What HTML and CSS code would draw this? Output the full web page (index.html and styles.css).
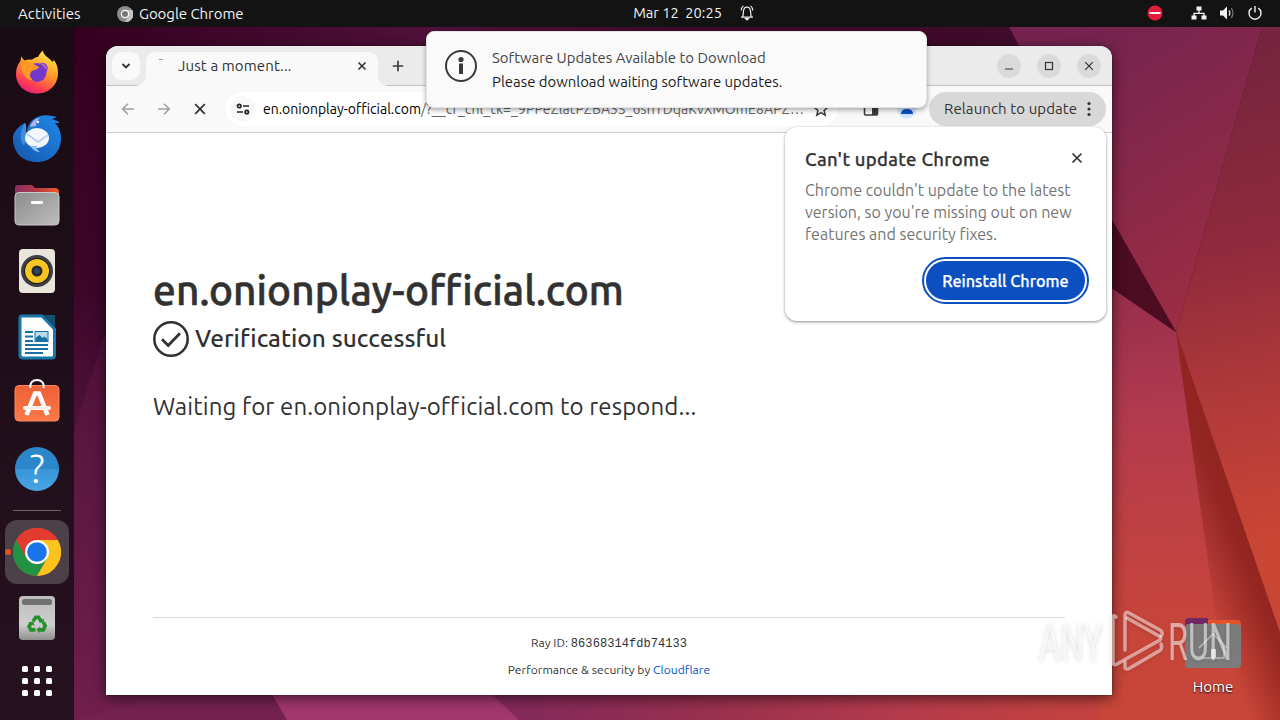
FILE: index.html
```
<!DOCTYPE html>
<html lang="en">

<head>
    <meta charset="UTF-8">
    <meta name="viewport" content="width=device-width, initial-scale=1.0">
    <title>Desktop</title>
    <link rel="stylesheet" href="styles.css">
</head>

<body>
    <!-- wallpaper -->
    <svg class="wallpaper" width="1280" height="720" viewBox="0 0 1280 720">
        <defs>
            <linearGradient id="base" x1="0" y1="0" x2="0" y2="1">
                <stop offset="0" stop-color="#35001f"/><stop offset=".4" stop-color="#3d0629"/>
                <stop offset=".65" stop-color="#54163e"/><stop offset="1" stop-color="#74204f"/>
            </linearGradient>
            <linearGradient id="topbg" x1="0" y1="0" x2="1" y2="0">
                <stop offset="0" stop-color="#35001f"/><stop offset=".35" stop-color="#50103a"/>
                <stop offset=".65" stop-color="#3c0a28"/><stop offset="1" stop-color="#420b2b"/>
            </linearGradient>
            <linearGradient id="bottombg" gradientUnits="userSpaceOnUse" x1="490" y1="0" x2="1180" y2="0">
                <stop offset="0" stop-color="#81285b"/><stop offset=".3" stop-color="#96304f"/>
                <stop offset=".6" stop-color="#b53b4b"/><stop offset="1" stop-color="#ca463a"/>
            </linearGradient>
            <linearGradient id="purple" gradientUnits="userSpaceOnUse" x1="1060" y1="40" x2="1220" y2="300">
                <stop offset="0" stop-color="#74234f"/><stop offset="1" stop-color="#9b2d44"/>
            </linearGradient>
            <linearGradient id="right" gradientUnits="userSpaceOnUse" x1="1190" y1="60" x2="1290" y2="530">
                <stop offset="0" stop-color="#76243f"/><stop offset=".4" stop-color="#8f2a3c"/>
                <stop offset=".7" stop-color="#b0393a"/><stop offset="1" stop-color="#c94534"/>
            </linearGradient>
            <linearGradient id="red" gradientUnits="userSpaceOnUse" x1="1130" y1="280" x2="1150" y2="640">
                <stop offset="0" stop-color="#942d4d"/><stop offset=".4" stop-color="#b43b4d"/>
                <stop offset="1" stop-color="#c84639"/>
            </linearGradient>
            <linearGradient id="shade" gradientUnits="userSpaceOnUse" x1="1180" y1="540" x2="1254" y2="511">
                <stop offset="0" stop-color="#8f2018" stop-opacity="0"/><stop offset=".65" stop-color="#8d211d" stop-opacity=".85"/>
                <stop offset="1" stop-color="#92241d"/>
            </linearGradient>
        </defs>
        <rect width="1280" height="720" fill="url(#base)"/>
        <polygon points="74,430 106,330 106,720 74,720" fill="#6b1c49" opacity=".35"/>
        <rect x="74" y="27" width="1000" height="40" fill="url(#topbg)"/>
        <polygon points="260,670 1200,670 1280,720 74,720" fill="#74224f"/>
        <polygon points="474,680 1200,600 1280,720 519,720" fill="url(#bottombg)"/>
        <polygon points="264,680 477,680 519,720 287,720" fill="#a2366f"/>
        <polygon points="1009,27 1262,27 1176,332 1112,220" fill="url(#purple)"/>
        <polygon points="1262,27 1280,27 1280,633 1176,332" fill="url(#right)"/>
        <polygon points="1100,280 1176,332 1280,633 1280,720 1100,720" fill="url(#red)"/>
        <polygon points="1176,332 1280,633 1280,720 1230,720" fill="url(#shade)"/>
        <polygon points="1100,202 1112,220 1176,332 1100,280" fill="#4c0c22"/>
    </svg>

    <header class="topbar">
        <div class="topbar-left">
            <span class="activities">Activities</span>
            <svg width="16" height="16" viewBox="0 0 16 16"><circle cx="8" cy="8" r="8" fill="#8c8c8c"/><path d="M8 4h7.5A8 8 0 0 1 8 16l3.5-6z" fill="#c4c4c4"/><circle cx="8" cy="8" r="3.6" fill="#777" stroke="#fff" stroke-width="1.2"/></svg>
            <span class="appname">Google Chrome</span>
        </div>
        <div class="clock">
            <span>Mar 12&nbsp; 20:25</span>
            <svg width="14" height="17" viewBox="0 0 14 17" fill="none" stroke="#eee" stroke-width="1.2"><path d="M1 13.2h12M2.8 13c.5-2 .4-4 .7-6C3.8 4.500 5 3.200 7 3.200s3.200 1.300 3.500 3.800c.3 2 .2 4 .7 6M1.200 6.500c.1-2 .9-3.500 2.200-4.600M12.800 6.500c-.1-2-.9-3.500-2.200-4.600"/><path d="M5.500 14.500h3L7 16z" fill="#eee"/></svg>
        </div>
        <div class="tray">
            <svg class="busy" width="16" height="16" viewBox="0 0 16 16"><circle cx="8" cy="8" r="7.500" fill="#e01b3c"/><path d="M2.500 8h11" stroke="#fff" stroke-width="2"/></svg>
            <svg width="16" height="16" viewBox="0 0 16 16" fill="#f2f2f2"><path d="M5.500 1.500h5v4h-5zM.5 10.500h5v4h-5zM10.500 10.500h5v4h-5z"/><path d="M8 5v3.300M3 11V8.300h10V11" fill="none" stroke="#f2f2f2" stroke-width="1.300"/></svg>
            <svg width="16" height="16" viewBox="0 0 16 16" fill="#f2f2f2"><path d="M1 5.500h3L8 1.500v13l-4-4H1z"/><path d="M10 5.300q1.800 2.700 0 5.400" fill="none" stroke="#ddd" stroke-width="1.300"/><path d="M12.300 3.200q3.200 4.800 0 9.600" fill="none" stroke="#777" stroke-width="1.200"/></svg>
            <svg width="16" height="16" viewBox="0 0 16 16" fill="none" stroke="#f2f2f2" stroke-width="1.400"><path d="M4.700 3.200a6 6 0 1 0 6.600 0M8 1v6.500"/></svg>
        </div>
    </header>

    <div class="screen">
        <nav class="dock">
            <div class="dock-item">
                <svg width="44" height="46" viewBox="0 0 44 46">
                    <defs><linearGradient id="fx" x1=".8" y1="0" x2=".3" y2="1"><stop offset="0" stop-color="#fff04a"/><stop offset=".45" stop-color="#ff9a26"/><stop offset=".8" stop-color="#ff3f50"/><stop offset="1" stop-color="#e6207c"/></linearGradient></defs>
                    <path d="M1 24C1 18 3 14 5.500 11c0-1.500.3-3 1-4.500 1 2 2 3.200 3.500 4 2-1 4.500-1.200 7-.8 2-1.700 4-2.500 6-2.700C24 5 26 2 28 .5c0 5 6 7 9 11 1.500.5 1.500-.5 1.500-2C42 14 43 18 43 23c0 12-9 20.500-21 20.500S1 35 1 24z" fill="url(#fx)"/>
                    <circle cx="22" cy="22.500" r="9.500" fill="#7437cc"/>
                    <path d="M6 14c6-2 10-3 14 1l4 2c-1 3-7 3-8 5-2 3-1 6 3 9-8-1-13-8-13-17z" fill="#ff9825"/>
                    <path d="M24 13.500c6 0 9 5 6 10 3-2 4-7 1-9.500-2-1.500-5-1.500-7-.5z" fill="#9344e0"/>
                </svg>
            </div>
            <div class="dock-item">
                <svg width="50" height="50" viewBox="0 0 50 50">
                    <defs><linearGradient id="tb" x1="1" y1="0" x2="0" y2="1"><stop offset="0" stop-color="#2089e8"/><stop offset="1" stop-color="#1557ae"/></linearGradient></defs>
                    <path d="M1 22C3 16 8 11 13 9c2 2 0 7 2 10 0-8 4-14 13-17 7-2 13 0 17 1l-5 2c3 1 6 2 8 4l-5 0c4 4 6 9 6 15 0 14-10 24-24 24C10 48 0 38 1 22z" fill="url(#tb)"/>
                    <path d="M13 9c3 3-1 9 3 14l-4 9C7 26 8 16 13 9z" fill="#3d8ce0"/>
                    <path d="M18 13c2-6 6-9 10-9-3 2-4 5-4 8z" fill="#b9b0ea"/>
                    <circle cx="26" cy="8" r="1.200" fill="#e9f3ff"/>
                    <ellipse cx="25" cy="24" rx="12" ry="10" fill="#f3f8ff"/>
                    <path d="M15 20l11 8 10-7" fill="none" stroke="#b8d1ed" stroke-width="2"/>
                    <path d="M18 32c3 4 6 6 10 6-3-2-4-4-3-6z" fill="#8ec0f2"/>
                </svg>
            </div>
            <div class="dock-item">
                <svg width="46" height="42" viewBox="0 0 46 42">
                    <defs><linearGradient id="fol" x1="0" x2="1"><stop offset="0" stop-color="#87305e"/><stop offset=".5" stop-color="#b83848"/><stop offset="1" stop-color="#ee5a24"/></linearGradient>
                    <linearGradient id="gray" x1="0" y1="0" x2="1" y2="1"><stop offset="0" stop-color="#8c8c8c"/><stop offset="1" stop-color="#bdbdbd"/></linearGradient></defs>
                    <path d="M1 4q0-3 3-3h14l3 3h20q4 0 4 4v10H1z" fill="url(#fol)"/>
                    <rect x="1" y="8.500" width="44" height="32.500" rx="4" fill="url(#gray)" stroke="#c9c9c9"/>
                    <rect x="17" y="17" width="12" height="3" rx="1" fill="#fff"/>
                </svg>
            </div>
            <div class="dock-item">
                <svg width="38" height="46" viewBox="0 0 38 46"><rect x="1" y="1" width="36" height="44" rx="4" fill="#e9e5db"/><circle cx="19" cy="23" r="16" fill="#3c3f43"/><circle cx="19" cy="23" r="13" fill="#1f1c18"/><circle cx="19" cy="23" r="12" fill="#f7c522"/><circle cx="19" cy="23" r="5.500" fill="#252a30"/><circle cx="19" cy="23" r="2.800" fill="#3b4855"/></svg>
            </div>
            <div class="dock-item">
                <svg width="38" height="46" viewBox="0 0 38 46"><path d="M3 2h21l12.500 13v26q0 3-3 3H5q-3 0-3-3V4q0-2 2-2z" fill="#fff" stroke="#1878ac" stroke-width="3"/><path d="M25 1h12v13z" fill="#14506f"/><path d="M7 18h8M7 22.500h8M7 27h8M7 31h23M7 35h23M7 39h18" stroke="#17709f" stroke-width="2"/><rect x="17" y="17.500" width="13" height="10" fill="#b9ddf0" stroke="#17709f"/><path d="M17.500 27v-3l4-3 3 3 2-1.500 3 2.500v2z" fill="#17709f"/></svg>
            </div>
            <div class="dock-item">
                <svg width="46" height="48" viewBox="0 0 46 48">
                    <defs><linearGradient id="store" x1="0" y1="0" x2="0" y2="1"><stop offset="0" stop-color="#ee6038"/><stop offset="1" stop-color="#fb7946"/></linearGradient></defs>
                    <rect x="1" y="6.500" width="44" height="35.500" rx="4" fill="url(#store)" stroke="#fb8a61"/>
                    <path d="M16.500 9c-1-5 2-8 6.500-8s7.500 3 6.500 8" fill="none" stroke="#fff" stroke-width="2"/>
                    <path d="M12.500 36L21 14.500h4L33.500 36" fill="none" stroke="#fff" stroke-width="4.500"/>
                    <path d="M11 29h24" stroke="#fff" stroke-width="4" stroke-linecap="round"/><path d="M12 29h22" stroke="#ffc8b3" stroke-width=".8"/>
                </svg>
            </div>
            <div class="dock-item">
                <span class="help">?</span>
            </div>
            <div class="dock-line"></div>
            <div class="dock-item active">
                <svg width="48" height="48" viewBox="0 0 48 48">
                    <circle cx="24" cy="24" r="24" fill="#e33b2e"/>
                    <path d="M3.200 12A24 24 0 0 0 24 48l10.400-18z" fill="#229342"/>
                    <path d="M24 48A24 24 0 0 0 44.800 12H24l10.400 18z" fill="#fcc31e"/>
                    <path d="M3.200 12l10.400 18L24 12h20.800A24 24 0 0 0 3.200 12z" fill="#e33b2e"/>
                    <circle cx="24" cy="24" r="12" fill="#fff"/><circle cx="24" cy="24" r="9.800" fill="#1a73e8"/>
                </svg>
            </div>
            <div class="dock-item">
                <svg width="38" height="46" viewBox="0 0 38 46">
                    <defs><linearGradient id="bin" x1="0" y1="0" x2="0" y2="1"><stop offset="0" stop-color="#bdbdbd"/><stop offset=".65" stop-color="#cecece"/><stop offset="1" stop-color="#8f8f8f"/></linearGradient></defs>
                    <rect x="1" y="1" width="36" height="44" rx="4" fill="url(#bin)"/><rect x="4" y="4" width="30" height="6" rx="2.500" fill="#707070"/>
                    <g transform="translate(2 2.500) scale(.9)"><path d="M14.500 26.500l3-4.500h3l3 4.500M26 27.500l2 4-2 4.500h-5M17 36h-5l-2-4 2.500-4" fill="none" stroke="#26912c" stroke-width="4"/>
                    <path d="M21 28l5.500 0 0-5zM22 32.500v7l-4-3.500zM9 28l6-1.500 1 5z" fill="#26912c"/></g>
                </svg>
            </div>
            <div class="dock-item apps">
                <i></i><i></i><i></i><i></i><i></i><i></i><i></i><i></i><i></i>
            </div>
        </nav>

        <main class="workspace">
            <!-- desktop icon -->
            <div class="home">
                <svg width="58" height="54" viewBox="0 0 58 54"><path d="M1 6q0-4 4-4h18l4 4h26q4 0 4 4v10H1z" fill="#6f2864"/><path d="M24 4h29q4 0 4 4v6H24z" fill="#e2542c"/><rect x="1" y="8" width="56" height="44" rx="4" fill="#7c7c7c"/><path d="M15 32l14-14 14 14M18 42h22V30M29 34v8" fill="none" stroke="#bdbdbd" stroke-width="1.500"/><rect x="27" y="33" width="5" height="9" fill="#ddd"/></svg>
                <span>Home</span>
            </div>

            <!-- browser window -->
            <section class="window">
                <div class="tabstrip">
                    <div class="tab-search">
                        <svg width="10" height="8" viewBox="0 0 10 8" fill="none" stroke="#333" stroke-width="1.900"><path d="M1.500 2L5 5.500 8.500 2"/></svg>
                    </div>
                    <div class="tab">
                        <span class="spinner"></span>
                        <span class="tab-title">Just a moment...</span>
                        <svg width="10" height="10" viewBox="0 0 10 10" stroke="#333" stroke-width="1.600"><path d="M1.500 1.500l7 7M8.500 1.500l-7 7"/></svg>
                    </div>
                    <svg class="newtab" width="12" height="12" viewBox="0 0 12 12" stroke="#3a3a3a" stroke-width="1.700"><path d="M6 .8v10.400M.8 6h10.400"/></svg>
                    <div class="controls">
                        <span><svg width="10" height="10" viewBox="0 0 10 10"><path d="M1 8h8" stroke="#333" stroke-width="1.200"/></svg></span>
                        <span><svg width="10" height="10" viewBox="0 0 10 10"><rect x="1.500" y="1.500" width="7" height="7" fill="none" stroke="#333" stroke-width="1.200"/></svg></span>
                        <span><svg width="10" height="10" viewBox="0 0 10 10"><path d="M1.200 1.200l7.600 7.600M8.800 1.200L1.200 8.800" stroke="#333" stroke-width="1.200"/></svg></span>
                    </div>
                </div>
                <div class="toolbar">
                    <div class="nav-buttons">
                        <svg width="14" height="14" viewBox="0 0 14 14" fill="none" stroke="#a0a0a0" stroke-width="1.600"><path d="M13 7H2M7 1.700L1.700 7 7 12.300"/></svg>
                        <svg width="14" height="14" viewBox="0 0 14 14" fill="none" stroke="#a0a0a0" stroke-width="1.600"><path d="M1 7h11M7 1.700L12.300 7 7 12.300"/></svg>
                        <svg width="14" height="14" viewBox="0 0 14 14" stroke="#333" stroke-width="1.800"><path d="M2.200 2.200l9.600 9.600M11.800 2.200l-9.600 9.600"/></svg>
                    </div>
                    <div class="omnibox">
                        <span class="site-info"><svg width="14" height="12" viewBox="0 0 14 12" fill="none" stroke="#222" stroke-width="1.700"><circle cx="3.200" cy="3" r="1.700"/><path d="M7 3h6M1 9h6"/><circle cx="10.800" cy="9" r="1.700"/></svg></span>
                        <span class="url"><b>en.onionplay-official.com</b>/?__cf_chl_tk=_9PPeZlatPZBA3S_6snTDqaKvXMOmE8APZ…</span>
                        <svg width="16" height="16" viewBox="0 0 16 16" fill="none" stroke="#3c3c3c" stroke-width="1.500"><path d="M8 1.500l1.900 4.400 4.800.4-3.600 3.200 1.100 4.700L8 11.700l-4.200 2.500 1.100-4.700L1.300 6.300l4.800-.4z"/></svg>
                    </div>
                    <svg class="sidepanel" width="16" height="16" viewBox="0 0 16 16"><rect x="1.500" y="2" width="13" height="12" rx="1" fill="none" stroke="#3c3c3c" stroke-width="1.600"/><path d="M9 2h5.500v12H9z" fill="#3c3c3c"/></svg>
                    <svg class="avatar" width="20" height="20" viewBox="0 0 20 20"><circle cx="10" cy="10" r="9.500" fill="#d3e3fd"/><circle cx="10" cy="6" r="3" fill="#0b57d0"/><path d="M4 15q0-5 6-5t6 5z" fill="#0b4fc0"/></svg>
                    <div class="relaunch">
                        <span>Relaunch to update</span>
                        <svg width="4" height="16" viewBox="0 0 4 16" fill="#333"><circle cx="2" cy="2.500" r="1.600"/><circle cx="2" cy="8" r="1.600"/><circle cx="2" cy="13.500" r="1.600"/></svg>
                    </div>
                </div>
                <div class="page">
                    <h1>en.onionplay-official.com</h1>
                    <div class="verified">
                        <svg width="36" height="36" viewBox="0 0 36 36" fill="none" stroke="#313131" stroke-width="2.500"><circle cx="18" cy="18" r="16.700"/><path d="M9 18.200l6.200 6.300L27 12.200" stroke-width="2.700"/></svg>
                        <h2>Verification successful</h2>
                    </div>
                    <p class="waiting">Waiting for en.onionplay-official.com to respond...</p>
                    <footer class="footer">
                        <div class="ray">Ray ID: <code>86368314fdb74133</code></div>
                        <div class="perf">Performance &amp; security by <a>Cloudflare</a></div>
                    </footer>
                </div>
            </section>

            <!-- update popup -->
            <section class="popup">
                <div class="popup-head">
                    <h3>Can't update Chrome</h3>
                    <svg width="12" height="12" viewBox="0 0 12 12" stroke="#333" stroke-width="1.700"><path d="M1.500 1.500l9 9M10.500 1.500l-9 9"/></svg>
                </div>
                <p>Chrome couldn't update to the latest<br>version, so you're missing out on new<br>features and security fixes.</p>
                <button class="reinstall">Reinstall Chrome</button>
            </section>

            <!-- system notification -->
            <section class="notification">
                <svg width="34" height="34" viewBox="0 0 34 34"><circle cx="17" cy="17" r="15" fill="none" stroke="#3a3a3a" stroke-width="2"/><circle cx="17" cy="10.500" r="2.600" fill="#3a3a3a"/><rect x="15" y="14.500" width="4" height="10.500" fill="#3a3a3a"/></svg>
                <div>
                    <div class="note-title">Software Updates Available to Download</div>
                    <div class="note-text">Please download waiting software updates.</div>
                </div>
            </section>
        </main>
    </div>

    <!-- watermark -->
    <svg class="watermark" width="246" height="80" viewBox="0 0 246 80">
        <g class="mark-text">
            <text x="5" y="54" textLength="64" lengthAdjust="spacingAndGlyphs">ANY</text>
            <text x="134" y="54" textLength="64" lengthAdjust="spacingAndGlyphs">RUN</text>
        </g>
        <g fill="none" stroke="#fff" stroke-opacity=".5" stroke-width="3.500" stroke-linejoin="round" stroke-linecap="round">
            <path d="M82 11q-3-3-3 1v44q0 4 4 2l43-24q2-2-1-4L93 12"/>
            <path d="M91 44V9q0-4 4-2l31 17q4 3 1 6M91 56v4q0 5 5 2l29-17q4-2 2-7"/>
        </g>
    </svg>
</body>

</html>
```
FILE: styles.css
```
* {
    box-sizing: border-box;
}

body {
    margin: 0;
    width: 1280px;
    height: 720px;
    overflow: hidden;
    background: #3d0629;
    font-family: Ubuntu, "Noto Sans", sans-serif;
    font-size: 15px;
    color: #333;
}

svg {
    display: block;
    flex: none;
}

h1, h2, h3, p {
    margin: 0;
    font-weight: 500;
}

.wallpaper {
    position: absolute;
    left: 0;
    top: 0;
}

/* top bar */
.topbar {
    position: relative;
    display: grid;
    grid-template-columns: 1fr auto 1fr;
    align-items: center;
    height: 27px;
    padding: 0 17px 0 18px;
    background: #131313;
    color: #f2f2f2;
}

.topbar-left, .clock, .tray {
    display: flex;
    align-items: center;
}

.activities {
    width: 99px;
    letter-spacing: .12px;
}

.appname {
    margin-left: 6px;
    letter-spacing: -.05px;
}

.clock {
    gap: 18px;
    padding: 0 0 2px 106px;
    font-size: 14.6px;
}

.tray {
    justify-content: flex-end;
    gap: 12px;
    padding-bottom: 1px;
}

.busy {
    margin-right: 16px;
}

.screen {
    position: relative;
    display: flex;
    height: 693px;
}

/* dock */
.dock {
    width: 74px;
    padding-top: 13px;
    background: linear-gradient(#190b14, #26121f);
}

.dock-item {
    position: relative;
    display: flex;
    align-items: center;
    justify-content: center;
    height: 66px;
}

.dock-line {
    height: 1px;
    margin: 8px 13px 9px;
    background: #6d646a;
}

.active {
    width: 64px;
    height: 64px;
    margin: 1px 5px;
    border-radius: 12px;
    background: #4c4049;
}

.active::before {
    content: "";
    position: absolute;
    left: 0;
    top: 29px;
    width: 6px;
    height: 6px;
    border-radius: 3px;
    background: #e95420;
}

.help {
    width: 44px;
    height: 44px;
    border-radius: 50%;
    background: linear-gradient(#2c86ca 50%, #3795d8 50%, #4aa5e4);
    color: #fff;
    font-size: 39px;
    font-weight: 300;
    line-height: 44px;
    text-align: center;
}

.apps {
    display: grid;
    grid-template-columns: repeat(3, 6px);
    grid-auto-rows: 6px;
    gap: 6px;
    height: 60px;
    align-content: center;
    align-items: stretch;
}

.apps i {
    border-radius: 1.5px;
    background: #fff;
}

.workspace {
    position: relative;
    flex: 1;
}

.home {
    position: absolute;
    left: 1109px;
    top: 589px;
    display: flex;
    flex-direction: column;
    align-items: center;
    width: 60px;
    gap: 8px;
    color: #fff;
    text-shadow: 0 1px 2px #000;
}

/* browser window */
.window {
    position: absolute;
    left: 32px;
    top: 19px;
    display: flex;
    flex-direction: column;
    width: 1006px;
    height: 649px;
    border-radius: 12px 12px 0 0;
    background: #fff;
    box-shadow: 0 3px 14px rgba(0, 0, 0, .6), 0 0 1px #000;
    overflow: hidden;
}

.tabstrip {
    display: flex;
    align-items: center;
    height: 40px;
    background: #ebebeb;
    border-bottom: 1px solid #c4c4c4;
}

.tab-search {
    display: flex;
    align-items: center;
    justify-content: center;
    width: 28px;
    height: 28px;
    margin: 0 6px;
    border-radius: 9px;
    background: #f9f9f9;
}

.tab {
    position: relative;
    display: flex;
    align-items: center;
    align-self: flex-end;
    width: 232px;
    height: 34px;
    margin-bottom: -1px;
    padding: 0 11px 6px 13px;
    border-radius: 9px 9px 0 0;
    background: #f9f9f9;
}

/* flared bottom corners of the tab */
.tab::before, .tab::after {
    content: "";
    position: absolute;
    bottom: 0;
    left: -9px;
    width: 9px;
    height: 9px;
    background: radial-gradient(circle at 0 0, transparent 8px, #f9f9f9 9px);
}

.tab::after {
    left: 232px;
    background: radial-gradient(circle at 100% 0, transparent 8px, #f9f9f9 9px);
}

.spinner {
    width: 4px;
    height: 1px;
    margin: -13px 15px 0 0;
    background: #999;
}

.tab-title {
    flex: 1;
    padding-bottom: 2px;
    letter-spacing: .12px;
}

.newtab {
    margin-left: 14px;
}

.controls {
    display: flex;
    gap: 16px;
    margin: 0 11px 0 auto;
}

.controls span {
    display: flex;
    align-items: center;
    justify-content: center;
    width: 24px;
    height: 24px;
    border-radius: 50%;
    background: #dadada;
}

.toolbar {
    display: flex;
    align-items: center;
    height: 47px;
    background: #f9f9f9;
    border-bottom: 1px solid #cfcfcf;
}

.nav-buttons {
    display: flex;
    gap: 22px;
    padding-left: 15px;
}

.omnibox {
    display: flex;
    align-items: center;
    width: 612px;
    height: 34px;
    margin-left: 19px;
    padding-left: 4px;
    border-radius: 17px;
    background: #fff;
}

.site-info {
    display: flex;
    align-items: center;
    justify-content: center;
    width: 26px;
    height: 26px;
    border-radius: 50%;
    background: #f9f9f9;
}

.url {
    width: 542px;
    margin: 0 8px 0 7px;
    font-size: 14px;
    letter-spacing: .11px;
    white-space: nowrap;
    color: #666;
}

.url b {
    font-weight: 400;
    letter-spacing: 0;
    color: #000;
}

.sidepanel {
    margin-left: 25px;
}

.avatar {
    margin-left: 18px;
}

.relaunch {
    display: flex;
    align-items: center;
    justify-content: space-between;
    width: 177px;
    height: 34px;
    margin-left: 12px;
    padding: 0 15px;
    border-radius: 17px;
    background: #d8d8d8;
    letter-spacing: .1px;
    white-space: nowrap;
}

.relaunch span {
    padding-bottom: 2px;
}

/* page content */
.page {
    display: flex;
    flex-direction: column;
    flex: 1;
    padding: 128px 47px 0;
    color: #313131;
}

.page h1 {
    font-size: 40.6px;
    letter-spacing: .08px;
    line-height: 59px;
    margin-bottom: 1px;
    -webkit-text-stroke: .6px #313131;
}

.verified {
    display: flex;
    align-items: center;
    gap: 6px;
}

.page h2 {
    font-size: 24.4px;
    letter-spacing: .05px;
    line-height: 34px;
    padding-bottom: 2px;
}

.waiting {
    margin-top: 32px;
    font-size: 24px;
    font-weight: 400;
    letter-spacing: .1px;
    line-height: 36px;
    white-space: nowrap;
}

.footer {
    margin-top: auto;
    height: 78px;
    padding-top: 16px;
    border-top: 1px solid #d9d9d9;
    font-size: 12px;
    letter-spacing: .06px;
    line-height: 18px;
    text-align: center;
}

.footer code {
    font-family: "Liberation Mono", monospace;
    font-size: 12px;
}

.perf {
    margin-top: 8px;
}

.perf a {
    color: #0051c3;
}

/* update popup */
.popup {
    position: absolute;
    left: 711px;
    top: 100px;
    width: 321px;
    height: 194px;
    padding: 20px;
    border-radius: 12px;
    background: #fff;
    box-shadow: 0 1px 3px rgba(0, 0, 0, .45);
}

.popup-head {
    display: flex;
    justify-content: space-between;
    padding-right: 3px;
}

.popup-head svg {
    margin-top: 5px;
}

.popup h3 {
    font-size: 18.5px;
    letter-spacing: .3px;
    line-height: 24px;
    white-space: nowrap;
    -webkit-text-stroke: .25px #333;
}

.popup p {
    margin-top: 8px;
    font-size: 16px;
    font-weight: 400;
    line-height: 22px;
    color: #757575;
    white-space: nowrap;
}

.reinstall {
    display: block;
    width: 159px;
    height: 39px;
    margin: 16px 1px 0 auto;
    padding: 0;
    border: 0;
    border-radius: 20px;
    outline: 2px solid #0b4fc0;
    outline-offset: 2px;
    background: #0b4fc0;
    color: #fff;
    font: 500 16.2px Ubuntu, "Noto Sans", sans-serif;
    -webkit-text-stroke: .25px #fff;
}

/* notification */
.notification {
    position: absolute;
    left: 352px;
    top: 4px;
    display: flex;
    gap: 14px;
    width: 501px;
    height: 77px;
    padding: 16px 17px;
    border: 1px solid #e4e4e4;
    border-radius: 8px;
    background: #fafafa;
    box-shadow: 0 2px 5px rgba(0, 0, 0, .35);
    font-size: 14.9px;
    line-height: 24px;
    white-space: nowrap;
}

.notification svg {
    margin-top: 1px;
}

.note-title {
    margin-top: -2px;
    color: #444;
}

.note-text {
    color: #1c1c1c;
}

.watermark {
    position: absolute;
    left: 1034px;
    top: 606px;
    filter: drop-shadow(0 1px 2px rgba(0, 0, 0, .25));
}

.mark-text text {
    fill: #fff;
    fill-opacity: .55;
    font-family: Roboto, sans-serif;
    font-size: 52px;
    font-weight: 400;
}
```
